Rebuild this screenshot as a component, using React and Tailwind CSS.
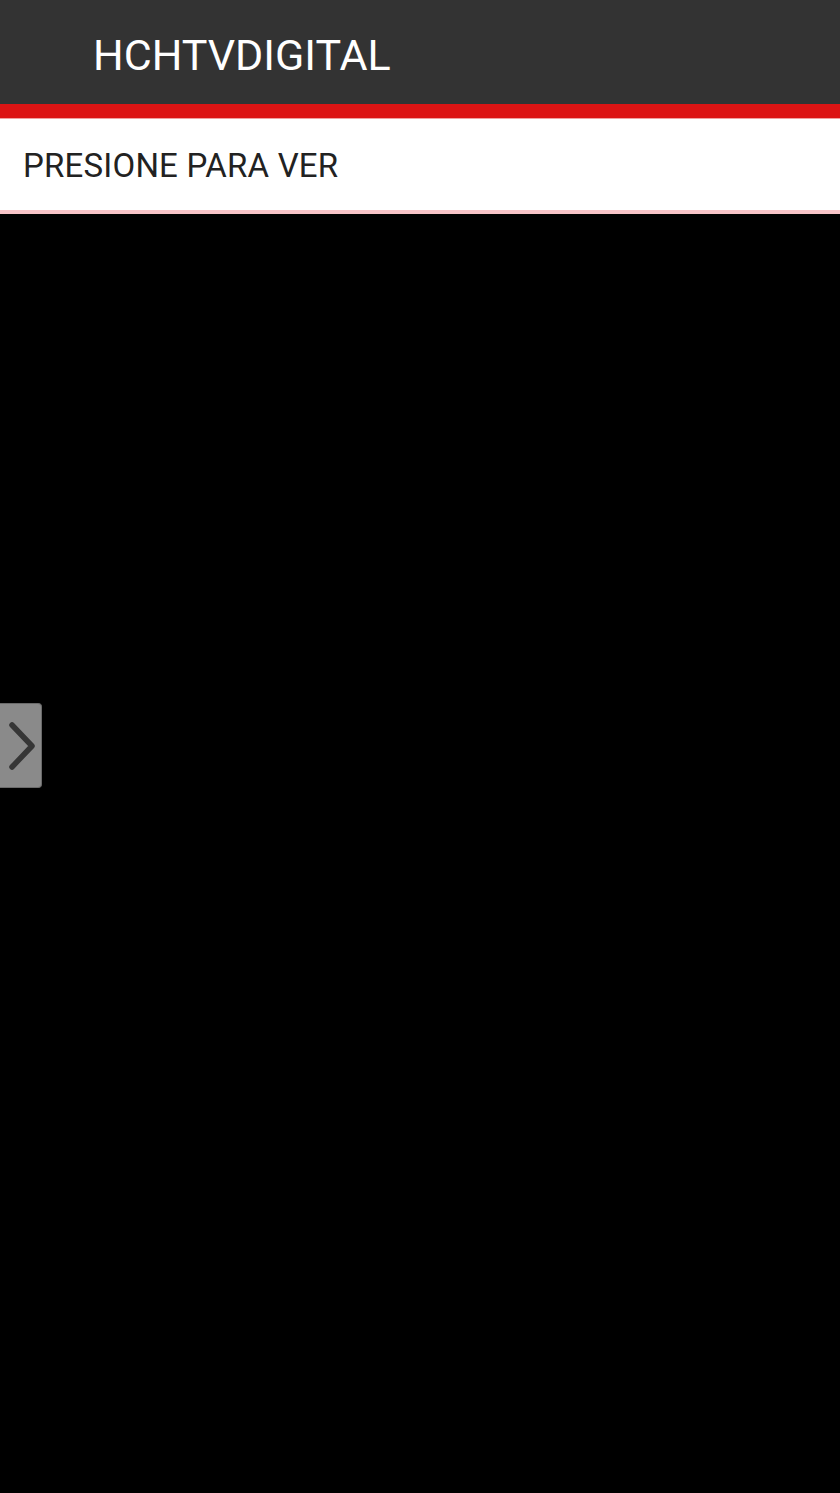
import React from "react";

const App = () => {
  return (
    <div className="w-[840px] h-[1493px] bg-black flex flex-col" style={{ fontFamily: "Roboto, 'Noto Sans', sans-serif" }}>
      {/* top bar */}
      <div className="h-[104px] bg-[#333333] flex items-center pl-[93px]">
        <span className="text-white text-[43px] leading-none pt-[6px]">HCHTVDIGITAL</span>
      </div>
      <div className="h-[14px] bg-[#dc1414]" />
      <div className="h-[1px] bg-[#f0a0a0]" />
      {/* tab */}
      <div className="h-[91px] bg-white flex items-center pl-[23px]">
        <span className="text-[#222222] text-[33px] leading-none tracking-[0.2px] pt-[2px]">PRESIONE PARA VER</span>
      </div>
      <div className="h-[4px] bg-[#f8c4c8]" />
      {/* content */}
      <div className="flex-1 relative">
        <div className="absolute left-0 top-[489px] w-[42px] h-[85px] bg-[#8a8a8a] border border-l-0 border-[#6a6a6a] rounded-r-[4px] flex items-center justify-center">
          <svg width="32" height="52" viewBox="0 0 32 52">
            <path d="M7 5 L27 26 L7 47" fill="none" stroke="#363636" strokeWidth="5.5" strokeLinecap="round" strokeLinejoin="round" />
          </svg>
        </div>
      </div>
    </div>
  );
};

export default App;
